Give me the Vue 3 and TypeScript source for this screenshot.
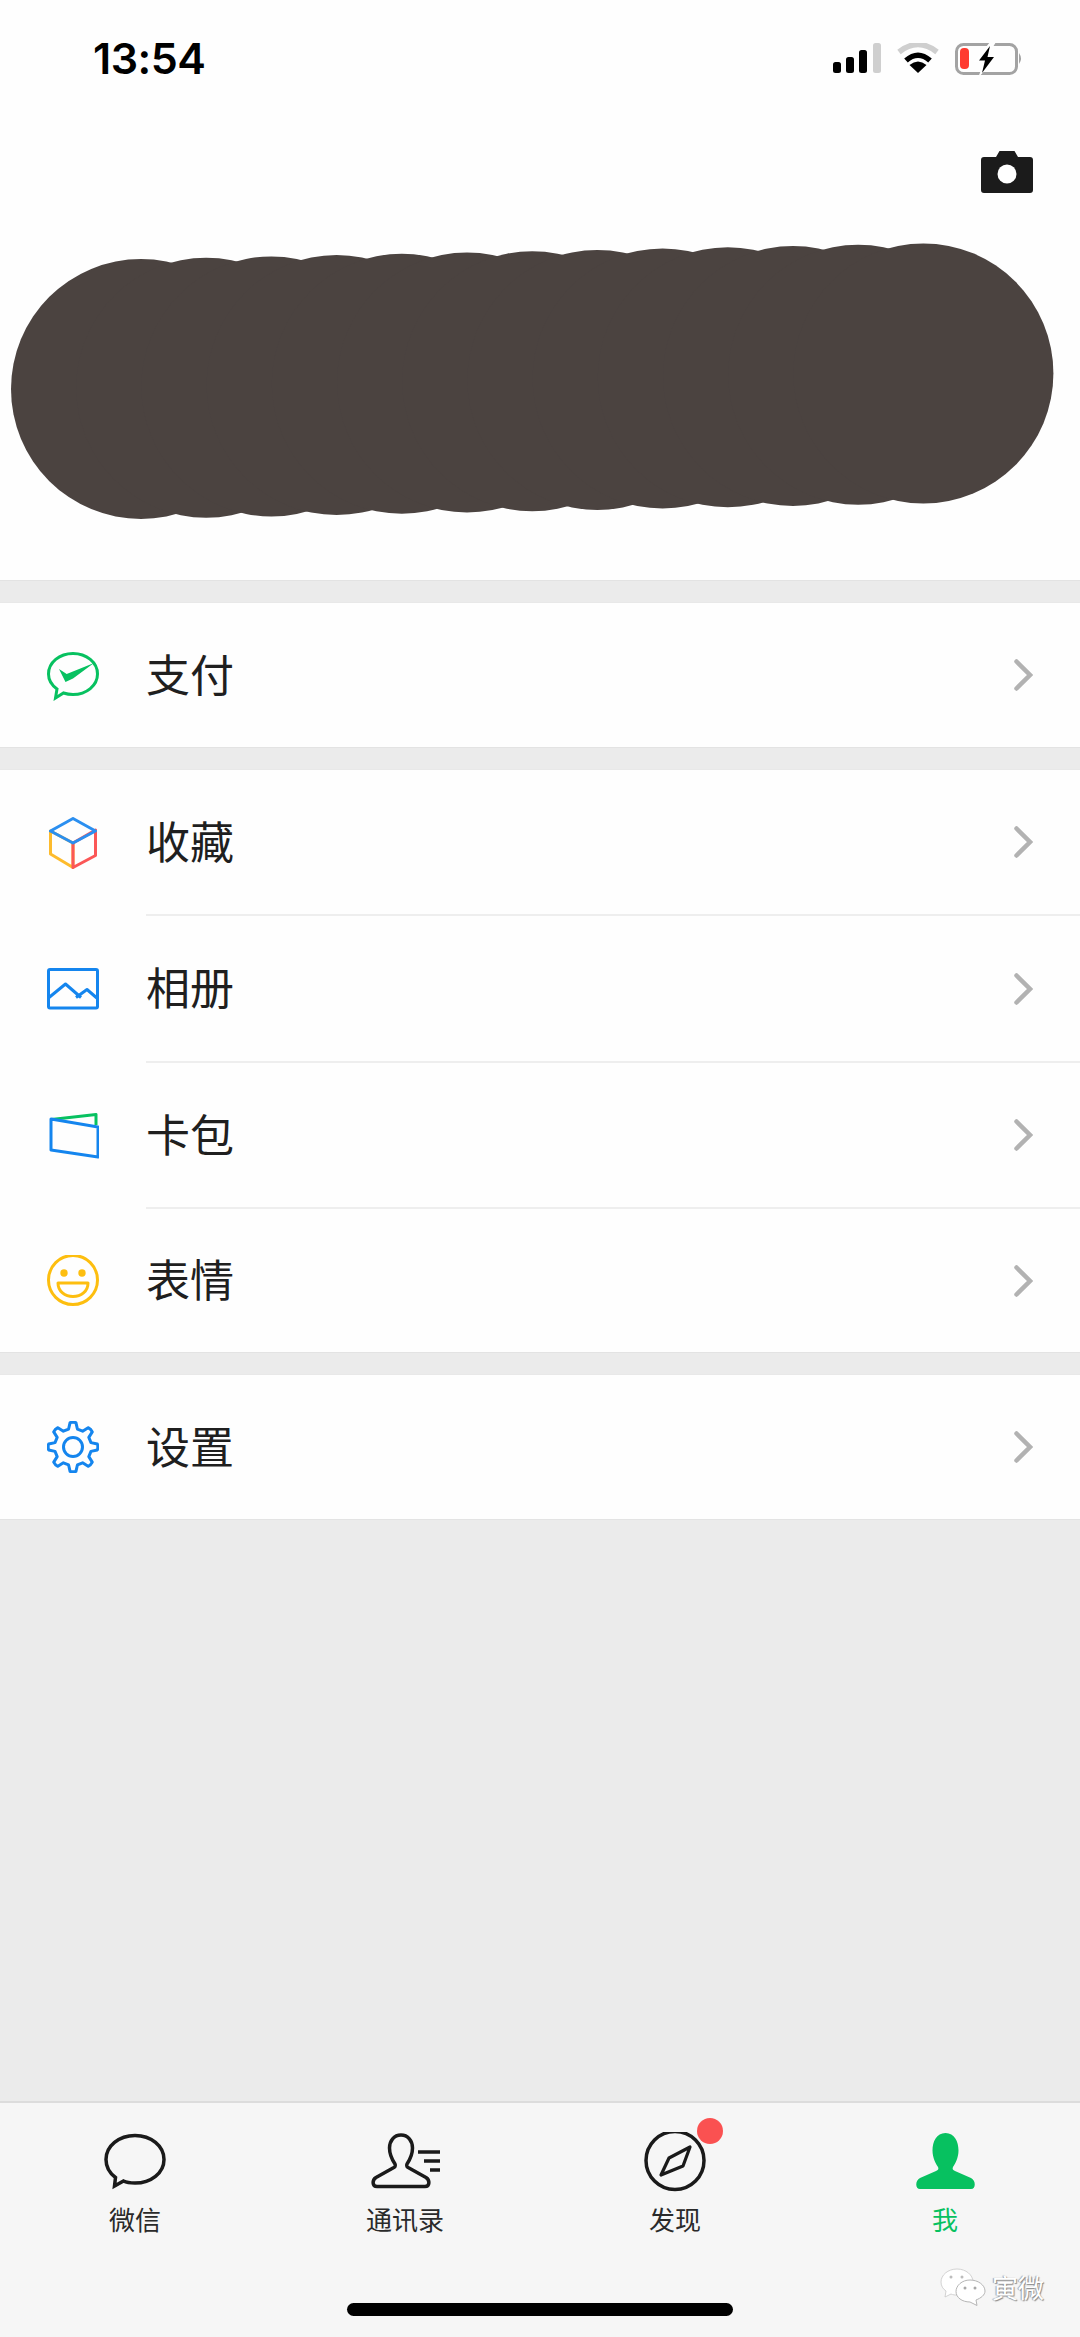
<script setup lang="ts">
interface Row { key: string; label: string }
interface Tab { key: string; label: string; active?: boolean }

const groups: Row[][] = [
  [{ key: 'pay', label: '支付' }],
  [
    { key: 'fav', label: '收藏' },
    { key: 'album', label: '相册' },
    { key: 'card', label: '卡包' },
    { key: 'smile', label: '表情' },
  ],
  [{ key: 'gear', label: '设置' }],
]

const tabs: Tab[] = [
  { key: 'chat', label: '微信' },
  { key: 'contacts', label: '通讯录' },
  { key: 'discover', label: '发现' },
  { key: 'me', label: '我', active: true },
]

const blobs = Array.from({ length: 13 }, (_, i) => ({ cx: 141 + i * 65.2, cy: 389 - i * 1.3 }))

function gearPath(): string {
  const pts: string[] = []
  const cx = 26
  const cy = 26
  for (let i = 0; i < 8; i++) {
    const a = (i * Math.PI) / 4 - Math.PI / 2
    const p = (r: number, d: number) => {
      const x = cx + r * Math.cos(a + d)
      const y = cy + r * Math.sin(a + d)
      return `${x.toFixed(2)} ${y.toFixed(2)}`
    }
    pts.push(`${i === 0 ? 'M' : 'L'}${p(18.5, -0.24)}`)
    pts.push(`L${p(24.5, -0.12)}`)
    pts.push(`Q${p(25.4, 0)} ${p(24.5, 0.12)}`)
    pts.push(`L${p(18.5, 0.24)}`)
  }
  return pts.join(' ') + ' Z'
}
const gear = gearPath()
</script>

<template>
  <div class="page">
    <header class="profile">
      <div class="status">
        <span class="time">13:54</span>
        <div class="status-icons">
          <svg class="signal" viewBox="833 43 48 30" width="48" height="30">
            <rect x="833" y="62" width="8" height="11" rx="2.500" fill="#000" />
            <rect x="846" y="57" width="8" height="16" rx="2.500" fill="#000" />
            <rect x="859" y="50" width="8" height="23" rx="2.500" fill="#000" />
            <rect x="873" y="43" width="8" height="30" rx="2.500" fill="#cfcfcf" />
          </svg>
          <svg class="wifi" viewBox="897 43 42 30" width="42" height="30">
            <path d="M899 52 Q918 37 937 52" fill="none" stroke="#cfcfcf" stroke-width="5.500" stroke-linecap="butt" />
            <path d="M906 60.500 Q918 50 930 60.500" fill="none" stroke="#000" stroke-width="5.500" />
            <path d="M918 73 L909.500 65 Q918 58 926.500 65 Z" fill="#000" />
          </svg>
          <svg class="battery" viewBox="955 43 68 32" width="68" height="32">
            <rect x="956.500" y="44.500" width="60" height="29" rx="7" fill="none" stroke="#a3a3a3" stroke-width="3" />
            <path d="M1019 53 Q1023 58.500 1019 64 Z" fill="#a3a3a3" />
            <rect x="960" y="48" width="9" height="21" rx="4" fill="#ff3b30" />
            <path d="M990 42 L974 62 L984 62 L978 78 L999 55 L988 55 L996 42 Z" fill="#fff" />
            <path d="M990 46 L979 60.500 L985 60.500 L982 73 L994 57 L987.500 57 Z" fill="#000" />
          </svg>
        </div>
      </div>
      <div class="camera-row">
        <svg viewBox="981 151 52 42" width="52" height="42">
          <path d="M981 160 a3 3 0 0 1 3 -3 h12 l3.500 -6 h15 l3.500 6 h12 a3 3 0 0 1 3 3 v30 a3 3 0 0 1 -3 3 h-46 a3 3 0 0 1 -3 -3 Z" fill="#1b1b1b" />
          <circle cx="1007" cy="174" r="9.500" fill="#fff" />
        </svg>
      </div>
      <svg class="scribble" viewBox="0 243 1080 277" width="1080" height="277">
        <circle v-for="(b, i) in blobs" :key="i" :cx="b.cx" :cy="b.cy" r="130" fill="#4b4340" />
      </svg>
    </header>

    <section v-for="(group, gi) in groups" :key="gi" class="group">
      <div v-for="row in group" :key="row.key" class="row">
        <svg class="row-icon" viewBox="0 0 52 52" width="52" height="52" fill="none">
          <template v-if="row.key === 'pay'">
            <path d="M26 4.500 C39.500 4.500 50.500 13.500 50.500 25 C50.500 36.500 39.500 45.500 26 45.500 C22.500 45.500 19.500 45 16.500 44 L8.500 49 L10 40 C4.500 36 1.500 31 1.500 25 C1.500 13.500 12.500 4.500 26 4.500 Z" stroke="#07c160" stroke-width="3" stroke-linejoin="miter" />
            <path d="M12 20 L19.700 25 L47 14 L26 29.500 L18.500 33 Z" fill="#07c160" />
          </template>
          <template v-else-if="row.key === 'fav'">
            <path d="M3.500 14 L3.500 37 L26 50.500 L26 26 Z" stroke="#fdbb2d" stroke-width="3" stroke-linejoin="round" />
            <path d="M26 26 L48.500 13 L48.500 38.500 L26 50.500 Z" stroke="#fb5757" stroke-width="3" stroke-linejoin="round" />
            <path d="M26 1.500 L48.500 14 L26 26 L3.500 14 Z" stroke="#2b8ff0" stroke-width="3" stroke-linejoin="round" />
          </template>
          <template v-else-if="row.key === 'album'">
            <rect x="1.500" y="6.500" width="49" height="38.500" rx="1.500" stroke="#1485ee" stroke-width="3" />
            <path d="M2 34.500 L18.500 21 L34 34.500 M29 34.500 L40 26.500 L51 36" stroke="#1485ee" stroke-width="3" stroke-linejoin="round" />
          </template>
          <template v-else-if="row.key === 'card'">
            <path d="M4.500 10.500 L49 5.500 L49 16" stroke="#07c160" stroke-width="3" stroke-linejoin="round" />
            <path d="M4 10 L51 18 L51 48 L4 41 Z" stroke="#1485ee" stroke-width="3" stroke-linejoin="round" />
          </template>
          <template v-else-if="row.key === 'smile'">
            <circle cx="26" cy="25" r="24.500" stroke="#fdbe0f" stroke-width="3" />
            <circle cx="17" cy="18" r="3.700" fill="#fdbe0f" />
            <circle cx="35" cy="18" r="3.700" fill="#fdbe0f" />
            <path d="M11 28 L41 28 C41 36.500 34 41.500 26 41.500 C18 41.500 11 36.500 11 28 Z" stroke="#fdbe0f" stroke-width="3" stroke-linejoin="round" />
          </template>
          <template v-else>
            <path :d="gear" stroke="#1485ee" stroke-width="3" stroke-linejoin="round" />
            <circle cx="26" cy="26" r="9.500" stroke="#1485ee" stroke-width="3" />
          </template>
        </svg>
        <div class="row-body">
          <span class="row-label">{{ row.label }}</span>
          <svg class="chevron" viewBox="0 0 20 34" width="20" height="34" fill="none">
            <path d="M3.500 3.500 L17 17 L3.500 30.500" stroke="#b2b2b2" stroke-width="4.500" stroke-linecap="round" stroke-linejoin="miter" />
          </svg>
        </div>
      </div>
    </section>

    <nav class="tabbar">
      <div v-for="tab in tabs" :key="tab.key" class="tab" :class="{ active: tab.active }">
        <svg class="tab-icon" viewBox="0 0 80 62" width="80" height="62" fill="none">
          <template v-if="tab.key === 'chat'">
            <path d="M40 3.500 C56 3.500 69 14 69 27.500 C69 41 56 51 40 51 C35.500 51 31.500 50.500 28.500 49 L19.500 54 L20.500 45.500 C14.500 41 11 34.500 11 27.500 C11 14 24 3.500 40 3.500 Z" stroke="#1a1a1a" stroke-width="3.500" />
          </template>
          <template v-else-if="tab.key === 'contacts'">
            <path d="M36 3 C43 3 47.500 9 47.500 16 C47.500 23.500 44 29 42 32 C41 34 42 35 44 36 L61 45.500 C65 48 65 54.500 60 54.500 L12 54.500 C7 54.500 7 48 11 45.500 L28 36 C30 35 31 34 30 32 C28 29 24.500 23.500 24.500 16 C24.500 9 29 3 36 3 Z" stroke="#1a1a1a" stroke-width="3.500" stroke-linejoin="round" />
            <path d="M53 20 H75 M59 29 H75 M65 38 H75" stroke="#1a1a1a" stroke-width="3.500" />
          </template>
          <template v-else-if="tab.key === 'discover'">
            <circle cx="40" cy="28.500" r="29" stroke="#1a1a1a" stroke-width="3.500" />
            <path d="M55 15 L48 34 L26 43 L34 26 Z" stroke="#1a1a1a" stroke-width="3.200" stroke-linejoin="round" />
          </template>
          <template v-else>
            <path d="M40.500 1 C49.500 1 53.500 9.500 53.500 18.500 C53.500 26 50 32 48 35 C47 37 48 38 50 39 L66 46 C71 48.500 71 57 66 57 L15 57 C10 57 10 48.500 15 46 L31 39 C33 38 34 37 33 35 C31 32 27.500 26 27.500 18.500 C27.500 9.500 31.500 1 40.500 1 Z" fill="#07c160" />
          </template>
        </svg>
        <span v-if="tab.key === 'discover'" class="badge"></span>
        <span class="tab-label">{{ tab.label }}</span>
      </div>
      <div class="home-indicator"></div>
      <div class="watermark">
        <svg viewBox="0 0 46 38" width="46" height="38">
          <path d="M17 1 C8 1 1 7 1 14 C1 18 3 21 6 23 L5 29 L11 26 C13 27 15 27 17 27 C26 27 33 21 33 14 C33 7 26 1 17 1 Z" fill="#fff" stroke="#c8c8c8" stroke-width="0.800" />
          <path d="M30 12 C22 12 16 17.500 16 23.500 C16 29.500 22 34 30 34 L37 37.500 L36 32 C41 30 45 27 45 23 C45 17 38 12 30 12 Z" fill="#fff" stroke="#b5b5b5" stroke-width="1" />
          <circle cx="11" cy="9" r="1.500" fill="#bdbdbd" />
          <circle cx="22" cy="9" r="1.500" fill="#bdbdbd" />
          <circle cx="25" cy="20" r="1.500" fill="#a8a8a8" />
          <circle cx="35" cy="20" r="1.500" fill="#a8a8a8" />
        </svg>
        <span class="wm-text">寅微</span>
      </div>
    </nav>
  </div>
</template>

<style>
html, body { margin: 0; padding: 0; background: #ebebeb; }
</style>

<style scoped>
.page {
  position: relative;
  width: 1080px;
  height: 2337px;
  background: #ebebeb;
  display: flex;
  flex-direction: column;
  overflow: hidden;
  font-family: "Noto Sans CJK SC", "Noto Sans", sans-serif;
  color: #1c1c1c;
}
.profile {
  background: #fefefe;
  height: 581px;
  box-sizing: border-box;
  border-bottom: 1px solid #e3e3e3;
  flex: none;
}
.status {
  height: 151px;
  box-sizing: border-box;
  padding: 43px 57px 0 93px;
  display: flex;
  justify-content: space-between;
  align-items: flex-start;
}
.time {
  font-family: "Inter", "Liberation Sans", sans-serif;
  font-size: 43px;
  font-weight: 600;
  line-height: 31px;
  color: #000;
  letter-spacing: -0.5px;
}
.status-icons {
  display: flex;
  align-items: flex-start;
  gap: 16px;
}
.status-icons svg { display: block; }
.camera-row {
  display: flex;
  justify-content: flex-end;
  padding-right: 47px;
  height: 42px;
}
.scribble {
  display: block;
  margin-top: 50px;
}
.group {
  background: #fefefe;
  margin-top: 21px;
  border-top: 1px solid #e8e8e8;
  border-bottom: 1px solid #e3e3e3;
  flex: none;
}
.row {
  height: 144px;
  display: flex;
  align-items: center;
  padding-left: 47px;
  gap: 47px;
}
.row:nth-child(2) { height: 147px; }
.row:nth-child(3) { height: 146px; }
.row:nth-child(4) { height: 145px; }
.row + .row .row-body { border-top: 2px solid #eeeeee; box-sizing: border-box; }
.group:nth-of-type(2) .row-icon { margin-top: 2px; }
.row-icon { flex: none; display: block; }
.row-body {
  flex: 1;
  height: 100%;
  display: flex;
  align-items: center;
  justify-content: space-between;
  padding-right: 47px;
}
.row-label {
  font-size: 44px;
  line-height: 60px;
  margin-bottom: 5px;
  color: #1f1f1f;
}
.chevron { display: block; }
.tabbar {
  position: relative;
  margin-top: auto;
  height: 236px;
  box-sizing: border-box;
  background: #f6f6f6;
  border-top: 2px solid #dcdcdc;
  display: grid;
  grid-template-columns: repeat(4, 270px);
  flex: none;
}
.tab {
  position: relative;
  display: flex;
  flex-direction: column;
  align-items: center;
  padding-top: 29px;
}
.tab-icon { display: block; }
.tab-label {
  font-size: 26px;
  line-height: 36px;
  margin-top: 7px;
  color: #2a2a2a;
}
.tab.active .tab-label { color: #07c160; }
.badge {
  position: absolute;
  left: 157px;
  top: 15px;
  width: 26px;
  height: 26px;
  border-radius: 50%;
  background: #fa5151;
}
.home-indicator {
  position: absolute;
  left: 347px;
  top: 200px;
  width: 386px;
  height: 13px;
  border-radius: 7px;
  background: #000;
}
.watermark {
  position: absolute;
  left: 940px;
  top: 165px;
  display: flex;
  align-items: center;
  gap: 6px;
}
.wm-text {
  font-size: 26px;
  line-height: 36px;
  color: #fff;
  text-shadow: 1px 1px 1px #8a8a8a, -1px 0 1px #a0a0a0;
}
</style>
